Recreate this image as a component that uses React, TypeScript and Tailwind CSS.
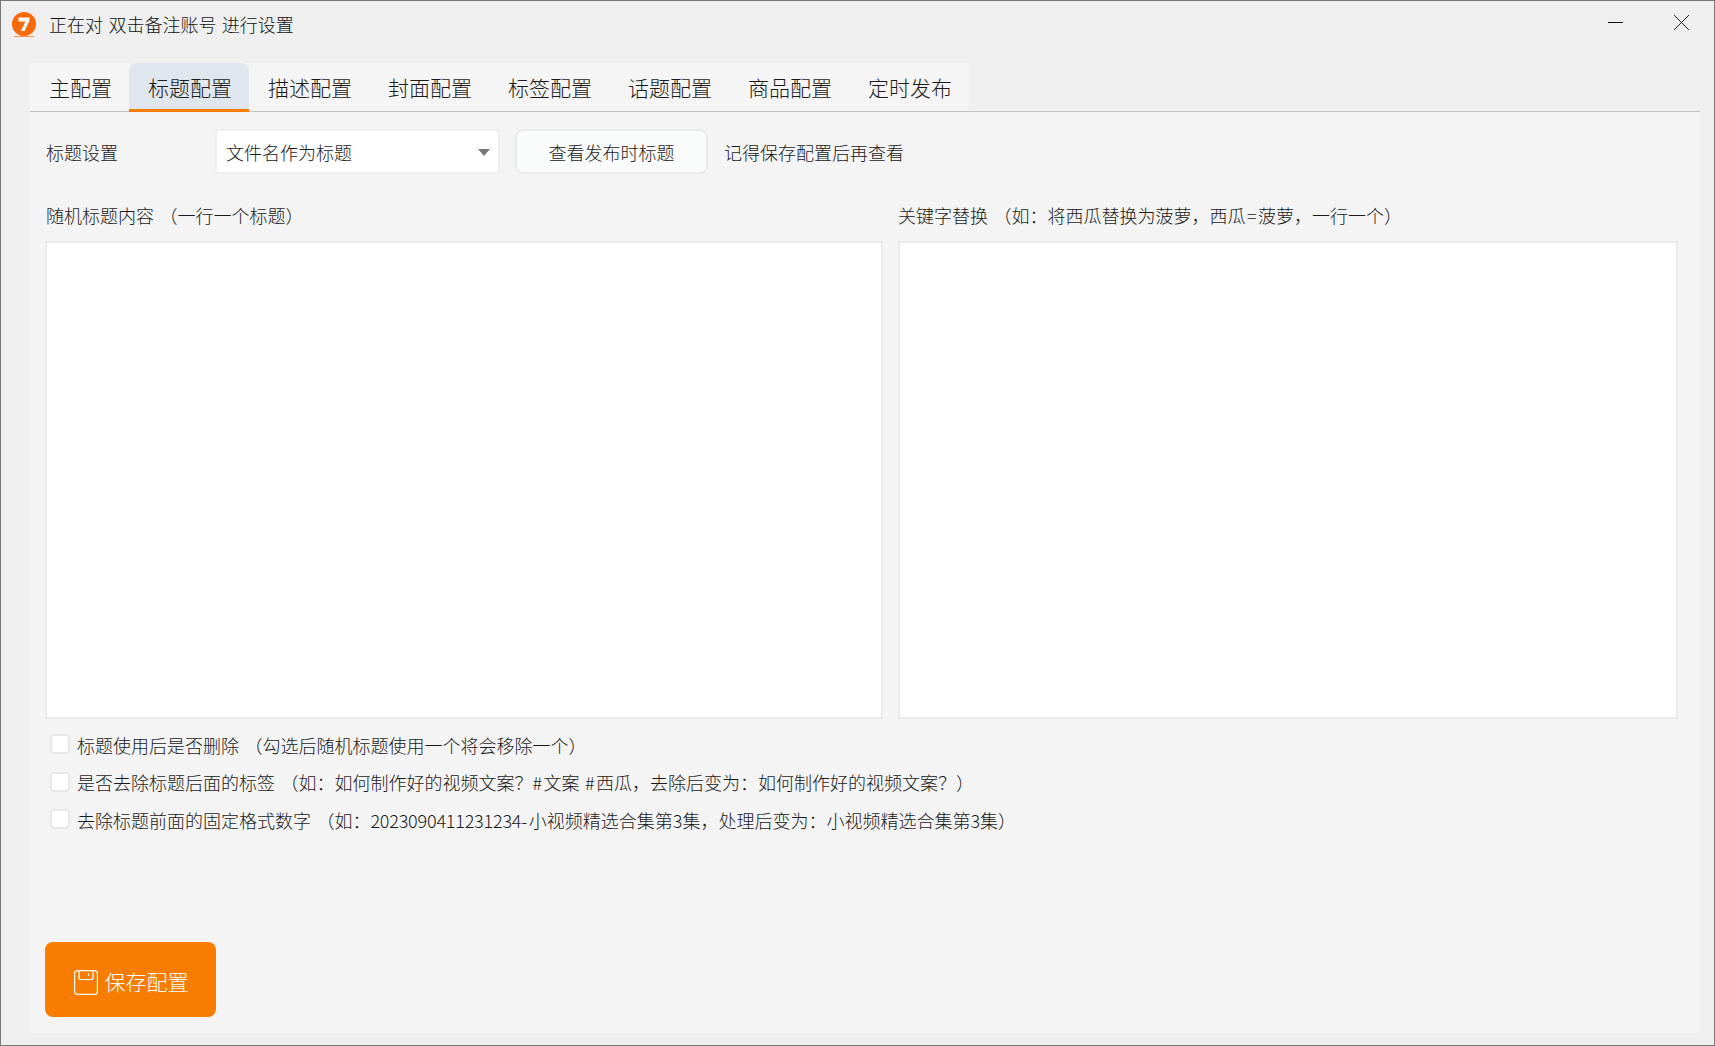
import { ReactNode } from 'react';

const tabs = ['主配置', '标题配置', '描述配置', '封面配置', '标签配置', '话题配置', '商品配置', '定时发布'];

const hash = <span className="tracking-[1.5px]">#</span>;

const options: ReactNode[] = [
  '标题使用后是否删除 （勾选后随机标题使用一个将会移除一个）',
  <>是否去除标题后面的标签 （如：如何制作好的视频文案？{hash}文案 {hash}西瓜，去除后变为：如何制作好的视频文案？）</>,
  <>
    去除标题前面的固定格式数字 （如：<span className="tracking-[-0.2px]">2023090411231234</span>
    <span className="tracking-[1.5px]">-</span>小视频精选合集第3集，处理后变为：小视频精选合集第3集）
  </>,
];

const App = () => {
  return (
    <div className="flex h-[1046px] w-[1715px] flex-col overflow-hidden border border-[#777777] bg-[#efefef] font-['Noto_Sans_CJK_SC',sans-serif] text-[18px] font-light text-[#1a1a1a] [word-spacing:1.4px]">
      <div className="flex h-[62px] shrink-0 items-center pb-[15px] pl-[11px]">
        <svg width="24" height="26" viewBox="0 0 24 26" className="shrink-0">
          <circle cx="12" cy="12" r="12" fill="#f86a0c" />
          <path d="M6.5 5.5h11v3L12.6 19H8.8l4.6-9.6H6.5z" fill="#ffffff" />
          <path d="M2 24.5h20" stroke="#f8913f" strokeWidth="1" />
        </svg>
        <span className="ml-[13px] text-[#111111]">正在对 双击备注账号 进行设置</span>
        <div className="mb-[4px] ml-auto flex items-center pr-[25px]">
          <svg width="15" height="15" viewBox="0 0 15 15">
            <path d="M0 7.5h15" stroke="#111111" strokeWidth="1" />
          </svg>
          <svg width="15" height="15" viewBox="0 0 15 15" className="ml-[51px]">
            <path d="M0 0l15 15M15 0L0 15" stroke="#222222" strokeWidth="1" />
          </svg>
        </div>
      </div>

      <div className="mr-[14px] ml-[29px] flex min-h-0 flex-1 flex-col bg-[#f4f4f4]">
        <div className="flex h-[49px] shrink-0 border-b border-[#c2c2c2] bg-[#efefef]">
          <div className="flex bg-[#f5f5f5]">
            {tabs.map((tab, i) => (
              <div
                key={tab}
                className={`flex h-[49px] items-center rounded-t-lg border-b-[3px] pt-[4px] pr-[17px] pl-[19px] text-[21px] ${
                  i === 1 ? 'border-[#f87c00] bg-[#dfe6ee]' : 'border-transparent'
                }`}
              >
                {tab}
              </div>
            ))}
          </div>
        </div>

        <div className="flex min-h-0 flex-1 flex-col pt-[17px] pr-[20px] pb-[16px] pl-[15px]">
          <div className="flex h-[45px] shrink-0 items-center">
            <span className="w-[170px] pt-[2px] pl-[1px]">标题设置</span>
            <div className="relative flex h-[45px] w-[285px] items-center rounded border-2 border-[#eeeeee] bg-white pt-[2px] pl-[9px]">
              文件名作为标题
              <span className="absolute top-[18px] right-[8px] h-0 w-0 border-x-[6px] border-t-[7px] border-x-transparent border-t-[#777777]" />
            </div>
            <button className="ml-[15px] h-[45px] w-[193px] rounded-lg border-2 border-[#eaeaea] bg-[#fafcfc] pt-[2px]">
              查看发布时标题
            </button>
            <span className="ml-[16px] pt-[2px]">记得保存配置后再查看</span>
          </div>

          <div className="mt-[27px] flex min-h-0 gap-[15px]">
            <div className="flex w-[838px] shrink-0 flex-col">
              <span className="h-[40px] pl-[1px] leading-[28px]">随机标题内容 （一行一个标题）</span>
              <div className="h-[478px] border-2 border-[#ebebeb] bg-white" />
            </div>
            <div className="flex w-[780px] shrink-0 flex-col">
              <span className="h-[40px] leading-[28px]">
                关键字替换 （如：将西瓜替换为菠萝，西瓜<span className="px-[1.5px]">=</span>菠萝，一行一个）
              </span>
              <div className="h-[478px] border-2 border-[#ebebeb] bg-white" />
            </div>
          </div>

          <div className="mt-[15px] flex flex-col gap-[17.5px] pl-[5px]">
            {options.map((option, i) => (
              <label key={i} className="flex h-[20px] items-center gap-[7px]">
                <span className="h-[20px] w-[20px] shrink-0 rounded border-2 border-[#e8e8e8] bg-white" />
                <span className="whitespace-nowrap pt-[2px]">{option}</span>
              </label>
            ))}
          </div>

          <button className="mt-auto flex h-[75px] w-[171px] items-center justify-center gap-[7px] rounded-lg bg-[#f87c00] pt-[5px] pl-[1px] text-[21px] text-white">
            <svg width="24" height="25" viewBox="0 0 24 25" fill="none" stroke="#ffffff" strokeWidth="1.2" className="shrink-0">
              <rect x="0.6" y="0.6" width="22.8" height="23.8" rx="3" />
              <path d="M5 1v6.5a2 2 0 0 0 2 2h10a2 2 0 0 0 2-2V1" />
              <path d="M14.5 3.5v2.5" />
            </svg>
            保存配置
          </button>
        </div>
      </div>
      <div className="h-[12px] shrink-0" />
    </div>
  );
};

export default App;
